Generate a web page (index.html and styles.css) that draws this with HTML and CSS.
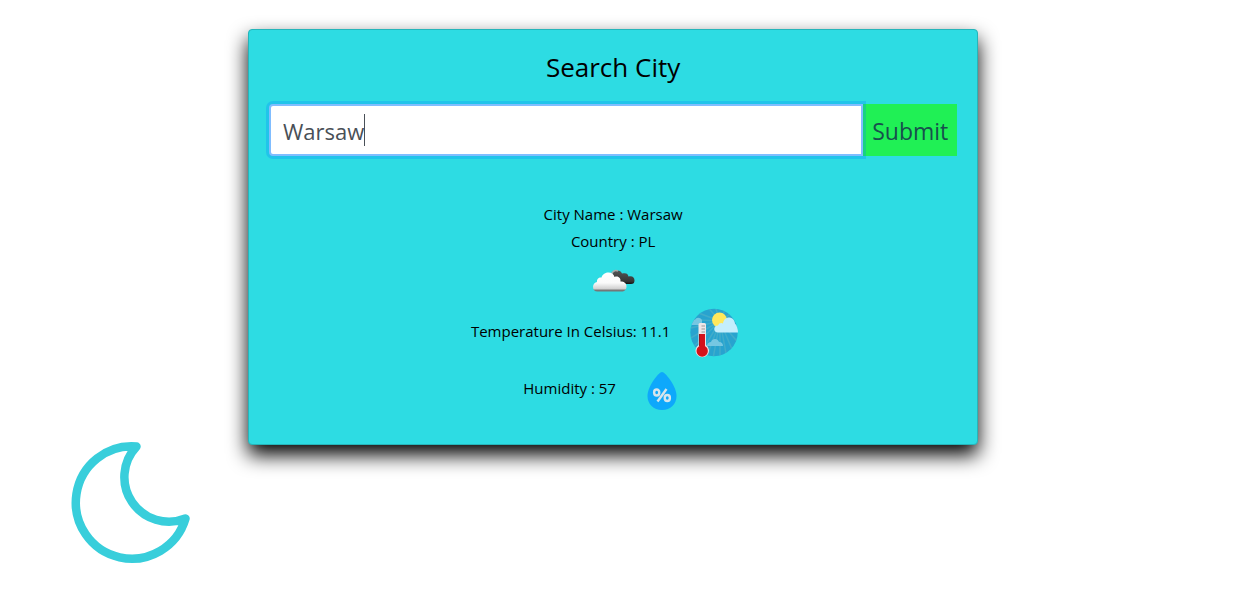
FILE: index.html
```html
<!DOCTYPE html>
<html lang="en">
<head>
<meta charset="utf-8">
<meta name="viewport" content="width=device-width, initial-scale=1">
<title>Weather</title>
<link rel="stylesheet" href="styles.css">
</head>
<body>
<div class="page">
  <aside class="side">
    <svg class="moon" viewBox="0 0 120 122" aria-hidden="true">
      <path d="M65.500 4.500A56 56.200 0 1 0 114.500 76.500A44.600 44.600 0 0 1 65.500 4.500Z" fill="none" stroke="#38cedb" stroke-width="8.500" stroke-linejoin="round"/>
    </svg>
  </aside>
  <main class="card">
    <form class="search">
      <label class="title" for="city">Search City</label>
      <div class="group">
        <div class="field">
          <input class="input" id="city" type="text" value="Warsaw" autocomplete="off" spellcheck="false">
          <span class="caret-row" aria-hidden="true"><span class="ghost">Warsaw</span><span class="caret"></span></span>
        </div>
        <button class="submit" type="button">Submit</button>
      </div>
    </form>
    <section class="weather">
      <p class="line">City Name : Warsaw</p>
      <p class="line">Country : PL</p>
      <svg class="cloud" viewBox="0 0 46 28" aria-hidden="true">
        <defs>
          <linearGradient id="white" x1="0" y1="0" x2="0" y2="1"><stop offset="0" stop-color="#fff"/><stop offset=".55" stop-color="#fafafa"/><stop offset=".86" stop-color="#d0d0d0"/><stop offset=".93" stop-color="#777"/><stop offset="1" stop-color="#777"/></linearGradient>
          <linearGradient id="dark" x1="0" y1="0" x2="0" y2="1"><stop offset="0" stop-color="#555"/><stop offset=".8" stop-color="#353535"/><stop offset="1" stop-color="#111"/></linearGradient>
        </defs>
        <path d="M22 9C22 5 24 2.500 27 2.500c3 0 4 1 5 3c4-1 6 0 6.500 3c4-1 6 1 6 4a3.500 3.500 0 0 1-3.500 3.500H27Z" fill="url(#dark)"/>
        <path d="M21.500 7c0-3 3-5.500 6.500-4" fill="none" stroke="#aaa" stroke-width="1.500"/>
        <path d="M7.500 23.500c-3 0-4.500-2-4.500-4.500c0-3 2-4.500 4-5c-.500-3 2-5 4.500-4.500C12.500 6 15.500 4.500 18.500 4.500c3 0 5.500 2 6 4.500c4-1.500 6.500 1.500 6 4.500c4 0 6 2 6 5c0 3-2 5-5 5Z" fill="url(#white)"/>
      </svg>
      <div class="reading">
        <p class="value">Temperature In Celsius: 11.1</p>
        <svg class="thermo" viewBox="0 0 48 52" aria-hidden="true">
          <defs><clipPath id="disc"><circle cx="24" cy="24.500" r="23.700"/></clipPath></defs>
          <circle cx="24" cy="24.500" r="23.700" fill="#29a3cf"/>
          <g clip-path="url(#disc)">
            <g stroke="#48afc9" stroke-width="1.500" opacity=".75">
              <path d="M30 13L-5 0M30 13L-8 11M30 13L-8 22M30 13L-8 35M30 13L-2 44M30 13L6 53M30 13L14 56M30 13L22 56M30 13L30 56M30 13L38 56M30 13L47 53M30 13L56 44M30 13L14-5M30 13L24-5M30 13L38-5M30 13L52-2"/>
            </g>
            <path d="M0 17V14c1-2 3-3 5-2c1-3 5-3 7 0v5Z" fill="#75c7e2"/>
            <path d="M17 38c0-3 2-4 4-4c1-4 7-4 8 0c3 0 4 2 4 4Z" fill="#75c7e2"/>
          </g>
          <circle cx="29.500" cy="12" r="7.500" fill="#ffe85c"/>
          <path d="M28 24.500c-5 0-5-7 0-7c1-3 4-3 5-2c1-8 11-8 12 0c2 2 3 6 3 9Z" fill="#c4eefd"/>
          <path d="M8.500 16.500a1.500 1.500 0 0 1 1.500-1.500h4.500a1.500 1.500 0 0 1 1.500 1.500V37a6.700 6.700 0 1 1-7.500 0Z" fill="#eee6e7"/>
          <circle cx="12.200" cy="43" r="5.700" fill="#d4121b"/>
          <path d="M9.500 26h5.500v13h-5.500Z" fill="#d4121b"/>
          <path d="M11.500 18h3.500M11.500 21h3.500M11.500 24h3.500" stroke="#999" stroke-width="1"/>
          <path d="M9.500 26v12" stroke="#991520" stroke-width="1"/>
        </svg>
      </div>
      <div class="reading humidity">
        <p class="value">Humidity : 57</p>
        <svg class="drop" viewBox="0 0 30 40" aria-hidden="true">
          <path d="M15 1C12 1 .5 15 .5 25c0 8 6 14 14.500 14s14.500-6 14.500-14C29.500 15 18 1 15 1Z" fill="#0ea8fb"/>
          <g fill="none" stroke="#d6e4ec" stroke-width="2.400"><ellipse cx="9.700" cy="21.500" rx="2.600" ry="3"/><ellipse cx="20.300" cy="27" rx="2.600" ry="3"/><path d="M19.500 18L10.500 30.500"/></g>
        </svg>
      </div>
    </section>
  </main>
</div>
</body>
</html>
```
FILE: styles.css
```css
* { box-sizing: border-box; }
body {
  margin: 0;
  background: #fff;
  color: #000;
  font: 15px/27px "Open Sans", "Noto Sans", sans-serif;
}
p { margin: 0; }
.page {
  display: grid;
  grid-template-columns: 248px 58% 1fr;
  padding-top: 29px;
}
.side { padding: 413px 0 0 71px; }
.moon { display: block; width: 120px; }
.card {
  align-self: start;
  padding: 18px 20px 33px;
  border: 1px solid #25b5ba;
  border-radius: 4px;
  background: #2ddce3;
  box-shadow: 0 10px 20px #000;
}
.title {
  display: block;
  margin-bottom: 18px;
  font-size: 26px;
  line-height: 38px;
  text-align: center;
}
.group { display: flex; }
.field { position: relative; flex: 1; z-index: 1; }
.input {
  display: block;
  width: 100%;
  height: 52px;
  padding: 2px 12px 0;
  border: 2px solid #80bdff;
  border-radius: 4px 0 0 4px;
  outline: 0;
  background: #fff;
  color: #495057;
  font: 22px/32px "Open Sans", "Noto Sans", sans-serif;
  box-shadow: 0 0 0 3px rgba(0, 123, 255, .25);
}
.caret-row {
  position: absolute;
  inset: 10px auto auto 14px;
  display: flex;
  font-size: 22px;
  line-height: 32px;
  pointer-events: none;
}
.ghost { visibility: hidden; }
.caret { width: 1px; background: #495057; }
.submit {
  width: 94px;
  padding: 2px 0 0;
  border: 0;
  background: #20f055;
  color: #17504d;
  font: 23px/32px "Open Sans", "Noto Sans", sans-serif;
}
.weather {
  display: flex;
  flex-direction: column;
  align-items: center;
  padding-top: 45px;
}
.cloud { width: 46px; height: 28px; margin: 13px 0 12px; }
.reading {
  display: flex;
  align-items: center;
  gap: 20px;
  padding-right: 17px;
}
.value { padding-bottom: 5px; }
.thermo { width: 48px; height: 52px; }
.humidity { gap: 31px; margin-top: 11px; padding-right: 26px; }
.drop { width: 30px; height: 40px; }
```
